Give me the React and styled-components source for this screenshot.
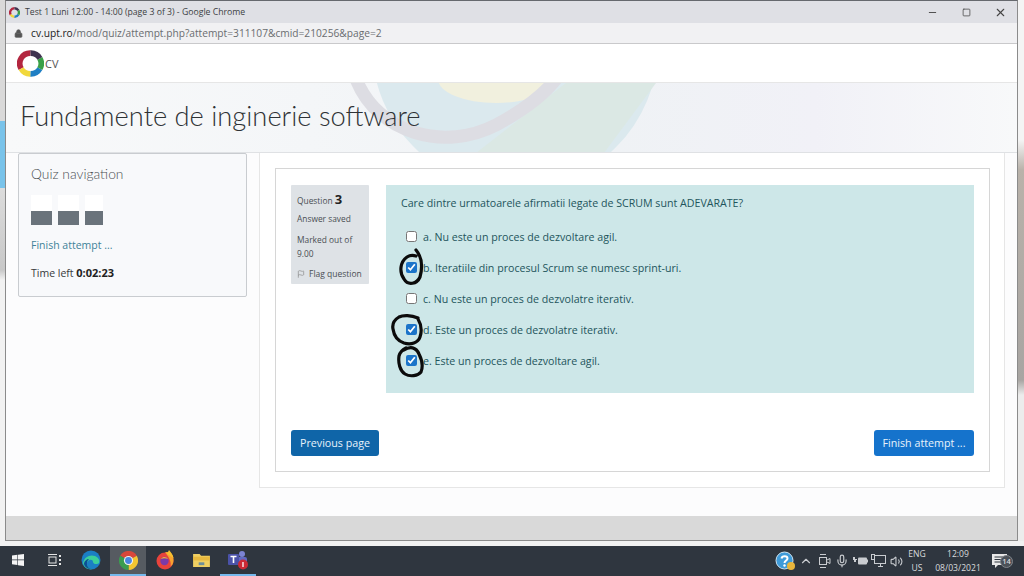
import React from 'react';
import styled, { createGlobalStyle } from 'styled-components';
import { Lock, Minus, Square, X, Flag, ChevronUp, Mic, Volume2 } from 'lucide-react';

const Global = createGlobalStyle`
  html, body { margin: 0; padding: 0; height: 100%; overflow: hidden; }
  body { font-family: "Open Sans", "Noto Sans", sans-serif; background: #f2f2f2; }
`;

const Desktop = styled.div`
  width: 1024px;
  height: 576px;
  display: flex;
  flex-direction: column;
  overflow: hidden;
`;
const Upper = styled.div`
  display: flex;
  height: 546px;
`;
const LeftStrip = styled.div`
  width: 5px;
  height: 541px;
  background: linear-gradient(#d9d9d9 0, #d9d9d9 121px, #79c3ea 121px, #79c3ea 188px, #dcdcdc 188px, #c8c8c8 270px, #f2f2f2 280px);
`;
const RightStrip = styled.div`
  width: 6px;
  height: 541px;
  background: linear-gradient(#f4f4f4 0, #f4f4f4 140px, #b9b2aa 170px, #a8a5a2 380px, #ececec 395px);
`;
const Window = styled.div`
  width: 1013px;
  height: 541px;
  box-sizing: border-box;
  border: 1px solid #8b8b8b;
  border-top-color: #66696e;
  display: flex;
  flex-direction: column;
  background: #fcfcfd;
  position: relative;
`;
const TitleBar = styled.div`
  height: 22px;
  background: #dfe0e5;
  display: flex;
  align-items: center;
  padding-left: 3px;
  font-size: 8.7px;
  color: #3c4043;
`;
const TitleText = styled.span`
  flex: 1;
  margin-left: 5px;
`;
const WinButton = styled.span`
  width: 34px;
  display: flex;
  justify-content: center;
  color: #444;
`;
const AddressBar = styled.div`
  height: 21px;
  box-sizing: border-box;
  background: #f1f1f3;
  border-bottom: 1px solid #c9c9cb;
  display: flex;
  align-items: center;
  padding-left: 8px;
  gap: 8px;
  font-size: 10.2px;
  color: #6a6d70;
`;
const Host = styled.span`
  color: #222;
`;
const NavBar = styled.div`
  height: 39px;
  box-sizing: border-box;
  background: #fff;
  border-bottom: 1px solid #e6e6e6;
  display: flex;
  align-items: center;
  padding-left: 11px;
  gap: 1px;
  font-size: 11px;
  color: #555;
`;
const Hero = styled.div`
  height: 70px;
  box-sizing: border-box;
  position: relative;
  overflow: hidden;
  background: linear-gradient(90deg, #f8f9fa 0, #f4f6f8 30%, #eff2f5 60%, #f1f1f7 80%, #f8f9fa 100%);
  border-bottom: 1px solid #dfe1e4;
  display: flex;
  align-items: center;
  padding-left: 14px;
`;
const HeroArt = styled.svg`
  position: absolute;
  left: 0;
  top: 0;
`;
const CourseTitle = styled.h1`
  position: relative;
  margin: 0 0 5px;
  font-family: Lato, "Open Sans", sans-serif;
  font-size: 27.3px;
  font-weight: 300;
  color: #2e3235;
`;
const Main = styled.div`
  flex: 1;
  display: flex;
  align-items: flex-start;
  gap: 12px;
  padding: 0 12px;
  background: #fcfcfd;
`;
const Block = styled.aside`
  width: 230px;
  height: 144px;
  box-sizing: border-box;
  background: #f8f9fb;
  border: 1px solid #c9ccd0;
  border-radius: 2px;
  padding: 11px 12px;
  font-size: 10.5px;
  color: #373a3c;
`;
const BlockTitle = styled.h2`
  margin: 0;
  font-family: Lato, "Open Sans", sans-serif;
  font-size: 13.8px;
  font-weight: 300;
  color: #4a4e51;
`;
const NavButtons = styled.div`
  display: flex;
  gap: 6px;
  margin-top: 13px;
`;
const NavBtn = styled.div`
  width: ${p => p.$w}px;
  height: 30px;
  background: linear-gradient(#fff 0, #fff 16px, #6a737b 16px);
`;
const FinishLink = styled.div`
  margin-top: 13px;
  color: #3f8299;
`;
const TimeLeft = styled.div`
  margin-top: 13px;
  strong { color: #222; font-size: 11px; }
`;
const Region = styled.main`
  width: 746px;
  height: 335px;
  box-sizing: border-box;
  background: #fff;
  border: 1px solid #e6e6e6;
  border-top: none;
  padding: 15px 14px 15px 15px;
`;
const Inner = styled.div`
  height: 304px;
  box-sizing: border-box;
  border: 1px solid #d6d6d6;
  padding: 16px 15px 15px;
  display: flex;
  flex-direction: column;
`;
const Question = styled.div`
  display: flex;
  align-items: flex-start;
  gap: 17px;
`;
const Info = styled.div`
  width: 78px;
  height: 99px;
  box-sizing: border-box;
  background: #dee2e6;
  padding: 8px 6px;
  font-size: 8.4px;
  line-height: 13px;
  color: #4a4f54;
  border-radius: 1px;
`;
const QNum = styled.div`
  display: flex;
  align-items: baseline;
  gap: 2px;
  strong { font-size: 13px; color: #222; }
`;
const InfoLine = styled.div`
  margin-top: ${p => p.$mt}px;
  line-height: 14px;
`;
const FlagRow = styled.div`
  display: flex;
  align-items: center;
  gap: 4px;
  margin-top: 6px;
  font-size: 8.5px;
  white-space: nowrap;
`;
const Content = styled.div`
  width: 588px;
  height: 208px;
  box-sizing: border-box;
  background: #cde7e8;
  padding: 11px 15px;
  color: #23555c;
  font-size: 10.65px;
`;
const Prompt = styled.p`
  margin: 0 0 18px;
  height: 15px;
  line-height: 15px;
`;
const Options = styled.div`
  display: flex;
  flex-direction: column;
  gap: 16px;
`;
const Option = styled.label`
  position: relative;
  display: flex;
  align-items: center;
  gap: 6px;
  height: 15px;
  padding-left: 5px;
`;
const Check = styled.input`
  width: 11px;
  height: 11px;
  margin: 0;
  accent-color: #1b74c9;
`;
const Scribble = styled.svg`
  position: absolute;
  left: ${p => p.$left}px;
  top: ${p => p.$top}px;
  pointer-events: none;
`;
const Actions = styled.div`
  display: flex;
  justify-content: space-between;
  margin-top: auto;
`;
const Button = styled.button`
  height: 26px;
  width: ${p => p.$w}px;
  border: none;
  border-radius: 3px;
  background: ${p => p.$bg};
  color: #e8f2fb;
  font-family: inherit;
  font-size: 10.7px;
  padding: 0;
`;
const Footer = styled.div`
  height: 24px;
  background: #d9d9d9;
`;
const Taskbar = styled.footer`
  height: 30px;
  background: #2f363f;
  display: flex;
  align-items: center;
  color: #d8dadd;
`;
const Slot = styled.div`
  width: 36.6px;
  height: 30px;
  box-sizing: border-box;
  display: flex;
  align-items: center;
  justify-content: center;
  background: ${p => (p.$active ? '#565b61' : 'transparent')};
  border-bottom: 2px solid ${p => (p.$open ? '#76b9ed' : 'transparent')};
`;
const Tray = styled.div`
  margin-left: auto;
  display: flex;
  align-items: center;
  height: 30px;
  padding-right: 7px;
  font-size: 8.6px;
`;
const TrayIcon = styled.div`
  width: ${p => p.$w || 18}px;
  display: flex;
  justify-content: center;
  color: #c9ccd0;
`;
const Stack = styled.div`
  width: ${p => p.$w}px;
  margin-right: ${p => p.$mr || 0}px;
  text-align: center;
  line-height: 14px;
  white-space: nowrap;
`;
const Notif = styled.div`
  width: 36px;
  position: relative;
  display: flex;
  justify-content: center;
`;
const NotifBadge = styled.span`
  position: absolute;
  left: 19px;
  top: 1px;
  width: 13px;
  height: 13px;
  box-sizing: border-box;
  border: 1px solid #80858b;
  border-radius: 50%;
  background: #4b5158;
  text-align: center;
  line-height: 11px;
  font-size: 7.5px;
  font-weight: 600;
`;

const Ring = ({ size }) => (
  <svg width={size} height={size} viewBox="0 0 26 26" fill="none" strokeWidth="5.500">
    <path d="M13 3 A10 10 0 0 0 4 18" stroke="#b3263f" />
    <path d="M4 18 A10 10 0 0 0 13 23" stroke="#f1d83c" />
    <path d="M13 23 A10 10 0 0 0 22 18" stroke="#1f7fc4" />
    <path d="M22 18 A10 10 0 0 0 22 8" stroke="#3aa047" />
    <path d="M22 8 A10 10 0 0 0 13 3" stroke="#3f3350" />
  </svg>
);

const WindowsLogo = () => (
  <svg width="12" height="12" viewBox="0 0 12 12" fill="#f4f4f4">
    <path d="M0 1.600 5.400.8v4.800H0zM6 .7 12 0v5.600H6zM0 6.200h5.400V11L0 10.300zM6 6.200h6V12l-6-.8z" />
  </svg>
);
const TaskView = () => (
  <svg width="14" height="12" viewBox="0 0 14 12" fill="none" stroke="#e4e4e4">
    <path d="M0 .5h9M0 11.500h9" />
    <rect x="1" y="3" width="7" height="6" />
    <path d="M12 1v2M12 5v2M12 9v2" strokeWidth="2" />
  </svg>
);
const Edge = () => (
  <svg width="20" height="20" viewBox="0 0 20 20">
    <circle cx="10" cy="10" r="9.500" fill="#1b7fc4" />
    <path d="M2 13C3 7 9 4 14 6c4 1.600 5 5 4 7-2 2-6 1-6-1 0-3-5-3-6 1-.5 3 2 6 5 6-5 1-8-2-9-6z" fill="#3ccf9a" />
    <path d="M6 13c-.5 3 2 6 5 6-3 .5-7-1-8-5 0-3 3-5 5-5-1 1-2 2-2 4z" fill="#0c4f94" />
  </svg>
);
const Chrome = () => (
  <svg width="19" height="19" viewBox="0 0 20 20">
    <path d="M10 10 1.300 5A10 10 0 0 1 18.700 5z" fill="#d8473a" />
    <path d="M10 10 18.700 5A10 10 0 0 1 10 20z" fill="#f2c531" />
    <path d="M10 10 10 20A10 10 0 0 1 1.300 5z" fill="#3b9c50" />
    <circle cx="10" cy="10" r="4.800" fill="#f4f4f4" />
    <circle cx="10" cy="10" r="3.600" fill="#4a86e0" />
  </svg>
);
const Firefox = () => (
  <svg width="20" height="20" viewBox="0 0 20 20">
    <circle cx="10" cy="11" r="8.500" fill="#e8433c" />
    <path d="M10 2.500c6-2 9 3 8.500 8 0 3-1.500 5-3 6 1-4-1-9-5.500-14z" fill="#f7a330" />
    <path d="M14 0c1.500 2 3.500 4 4.500 8L12 4z" fill="#f7c030" />
    <circle cx="9.500" cy="11" r="4.200" fill="#7b3aa8" />
    <path d="M6 9c2-3 6-2 7 0-2-1-5-1-7 0z" fill="#f7b030" />
  </svg>
);
const Folder = () => (
  <svg width="17" height="14" viewBox="0 0 18 15">
    <path d="M0 1h7l1.500 2H18v12H0z" fill="#f0cf62" />
    <rect y="4" width="18" height="4" fill="#e8b93f" />
    <rect x="6" y="10" width="6" height="3" fill="#6f8f9a" />
  </svg>
);
const Teams = () => (
  <svg width="22" height="20" viewBox="0 0 22 20">
    <circle cx="15" cy="4" r="3" fill="#7b83d4" />
    <rect x="9" y="7" width="11" height="8" rx="2" fill="#6169c2" />
    <rect x="1" y="4" width="11" height="11" rx="1" fill="#4a52a8" />
    <path d="M3.500 6.500h6M6.500 6.500v6.500" stroke="#fff" strokeWidth="1.600" />
    <circle cx="16" cy="14.500" r="5" fill="#cc2a35" />
    <path d="M16 12v5" stroke="#fff" strokeWidth="1.300" />
  </svg>
);
const Help = () => (
  <svg width="21" height="20" viewBox="0 0 21 20">
    <circle cx="9.500" cy="9.500" r="8.500" fill="#3f9bd9" stroke="#cfe6f5" strokeWidth="1" />
    <path d="M6.500 7.500C7 4.500 12.500 4.500 12.500 7.500 12.500 9.500 9.500 9.500 9.500 12" fill="none" stroke="#fff" strokeWidth="2" />
    <circle cx="9.500" cy="14.500" r="1.200" fill="#fff" />
    <circle cx="16" cy="15" r="4" fill="#e9b63c" />
  </svg>
);
const MeetNow = () => (
  <svg width="13" height="14" viewBox="0 0 13 14" fill="none" stroke="currentColor">
    <path d="M2 .5h6M2 13.500h6" />
    <rect x="1.500" y="3.500" width="7" height="7" />
    <path d="M9 6l3-1.500v5L9 8" />
  </svg>
);
const Power = () => (
  <svg width="15" height="10" viewBox="0 0 15 10" fill="currentColor">
    <path d="M0 1h2v2h2v1H3v2H1V4H0z" />
    <rect x="5" y="1.500" width="9" height="7" rx="1" />
    <rect x="14" y="3.500" width="1" height="3" />
  </svg>
);
const Network = () => (
  <svg width="15" height="14" viewBox="0 0 15 14" fill="none" stroke="currentColor">
    <rect x="3.500" y="1.500" width="11" height="8" />
    <path d="M7 12.500h5M9.500 10v2.500" />
    <rect x=".5" y=".5" width="3" height="5" fill="#2f363f" />
  </svg>
);
const Notes = () => (
  <svg width="15" height="15" viewBox="0 0 15 15" fill="#e8e8e8">
    <path d="M0 0h15v11H6l-3 3v-3H0z" />
    <path d="M2.500 3h10M2.500 5.500h10M2.500 8h10" stroke="#2f363f" />
  </svg>
);

const options = [
  { id: 'a', text: 'a. Nu este un proces de dezvoltare agil.' },
  {
    id: 'b', text: 'b. Iteratiile din procesul Scrum se numesc sprint-uri.', checked: true,
    left: -3, top: -12, w: 27, h: 39,
    d: 'M18 2C23 8 25 18 22 29 19 36 10 38 6 31 1 24 2 14 9 9 12 7 15 7 18 8',
  },
  { id: 'c', text: 'c. Nu este un proces de dezvolatre iterativ.' },
  {
    id: 'd', text: 'd. Este un proces de dezvolatre iterativ.', checked: true,
    left: -10, top: -8, w: 33, h: 33,
    d: 'M27 4C20 1 12 1 8 3 3 6 1 10 2 15 3 22 7 27 13 29 20 31 27 29 29 23 31 17 30 10 27 5',
  },
  {
    id: 'e', text: 'e. Este un proces de dezvoltare agil.', checked: true,
    left: -5, top: -8, w: 28, h: 33,
    d: 'M8 5C14 1 20 2 23 9 26 15 27 22 25 27 22 31 14 32 9 29 4 26 2 18 3 11 4 7 6 5 10 3',
  },
];

const App = () => (
  <Desktop>
    <Global />
    <Upper>
      <LeftStrip />
      <Window>
        <TitleBar>
          <Ring size={11} />
          <TitleText>Test 1 Luni 12:00 - 14:00 (page 3 of 3) - Google Chrome</TitleText>
          <WinButton><Minus size={11} /></WinButton>
          <WinButton><Square size={9} /></WinButton>
          <WinButton><X size={13} /></WinButton>
        </TitleBar>
        <AddressBar>
          <Lock size={9} fill="#555" color="#555" />
          <span><Host>cv.upt.ro</Host>/mod/quiz/attempt.php?attempt=311107&amp;cmid=210256&amp;page=2</span>
        </AddressBar>
        <NavBar>
          <Ring size={27} />
          <span>CV</span>
        </NavBar>
        <Hero>
          <HeroArt width="1012" height="70" viewBox="0 0 1012 70" fill="none">
            <circle cx="509" cy="-37" r="143" fill="#dbe9ee" />
            <path d="M560 0H650L598 70H470z" fill="#dbe8e4" />
            <ellipse cx="490" cy="-4" rx="58" ry="24" fill="#f1f0de" />
            <path d="M350 -4C372 52 440 68 490 42 516 28 536 14 550 -4" stroke="#dddde3" strokeWidth="13" />
          </HeroArt>
          <CourseTitle>Fundamente de inginerie software</CourseTitle>
        </Hero>
        <Main>
          <Block>
            <BlockTitle>Quiz navigation</BlockTitle>
            <NavButtons>
              <NavBtn $w={21} />
              <NavBtn $w={21} />
              <NavBtn $w={18} />
            </NavButtons>
            <FinishLink>Finish attempt ...</FinishLink>
            <TimeLeft>Time left <strong>0:02:23</strong></TimeLeft>
          </Block>
          <Region>
            <Inner>
              <Question>
                <Info>
                  <QNum>Question <strong>3</strong></QNum>
                  <InfoLine $mt={5}>Answer saved</InfoLine>
                  <InfoLine $mt={7}>Marked out of<br />9.00</InfoLine>
                  <FlagRow><Flag size={8} color="#888" />Flag question</FlagRow>
                </Info>
                <Content>
                  <Prompt>Care dintre urmatoarele afirmatii legate de SCRUM sunt ADEVARATE?</Prompt>
                  <Options>
                    {options.map(o => (
                      <Option key={o.id}>
                        <Check type="checkbox" defaultChecked={!!o.checked} />
                        {o.text}
                        {o.d && (
                          <Scribble $left={o.left} $top={o.top} width={o.w} height={o.h} viewBox={`0 0 ${o.w} ${o.h}`} fill="none" stroke="#0b0b0b" strokeWidth="3.200" strokeLinecap="round">
                            <path d={o.d} />
                          </Scribble>
                        )}
                      </Option>
                    ))}
                  </Options>
                </Content>
              </Question>
              <Actions>
                <Button $w={88} $bg="#0f65a8">Previous page</Button>
                <Button $w={100} $bg="#1573cc">Finish attempt ...</Button>
              </Actions>
            </Inner>
          </Region>
        </Main>
        <Footer />
      </Window>
      <RightStrip />
    </Upper>
    <Taskbar>
      <Slot><WindowsLogo /></Slot>
      <Slot><TaskView /></Slot>
      <Slot><Edge /></Slot>
      <Slot $active $open><Chrome /></Slot>
      <Slot><Firefox /></Slot>
      <Slot><Folder /></Slot>
      <Slot $open><Teams /></Slot>
      <Tray>
        <TrayIcon $w={24}><Help /></TrayIcon>
        <TrayIcon><ChevronUp size={14} /></TrayIcon>
        <TrayIcon><MeetNow /></TrayIcon>
        <TrayIcon><Mic size={14} /></TrayIcon>
        <TrayIcon><Power /></TrayIcon>
        <TrayIcon><Network /></TrayIcon>
        <TrayIcon><Volume2 size={13} /></TrayIcon>
        <Stack $w={24} $mr={6}>ENG<br />US</Stack>
        <Stack $w={46}>12:09<br />08/03/2021</Stack>
        <Notif>
          <Notes />
          <NotifBadge>14</NotifBadge>
        </Notif>
      </Tray>
    </Taskbar>
  </Desktop>
);

export default App;
